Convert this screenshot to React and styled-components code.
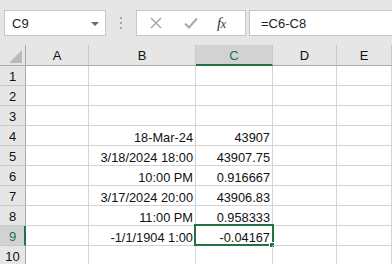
import React from "react";
import styled, { createGlobalStyle } from "styled-components";

const Global = createGlobalStyle`
  html, body { margin: 0; padding: 0; background: #ffffff; }
  body { font-family: "Liberation Sans", Arial, sans-serif; width: 392px; height: 264px; overflow: hidden; }
`;

const Page = styled.div`
  width: 392px;
  height: 264px;
  overflow: hidden;
  display: flex;
  flex-direction: column;
`;

const Toolbar = styled.div`
  height: 45px;
  flex: none;
  background: #e6e6e6;
  display: flex;
  align-items: flex-start;
  padding: 10px 0 0 4px;
  box-sizing: border-box;
`;

const NameBox = styled.div`
  width: 102px;
  height: 26px;
  box-sizing: border-box;
  background: #fff;
  border: 1px solid #c6c6c6;
  display: flex;
  align-items: center;
  padding: 0 0 0 7px;
  font-size: 13px;
  color: #222;
`;

const NameText = styled.span`
  flex: 1;
`;

const DropArrow = styled.span`
  width: 0;
  height: 0;
  border-left: 4px solid transparent;
  border-right: 4px solid transparent;
  border-top: 4px solid #6a6a6a;
  margin-right: 6px;
  margin-top: 1px;
`;

const Grip = styled.div`
  width: 30px;
  height: 26px;
  display: flex;
  flex-direction: column;
  align-items: center;
  justify-content: center;
  gap: 3px;
`;

const GripDot = styled.span`
  width: 2px;
  height: 2px;
  background: #a6a6a6;
`;

const FxBox = styled.div`
  width: 110px;
  height: 26px;
  box-sizing: border-box;
  background: #fff;
  border: 1px solid #c6c6c6;
  display: flex;
  align-items: center;
  padding-left: 13px;
  gap: 22px;
`;

const Fx = styled.span`
  font-family: "Liberation Serif", "Times New Roman", serif;
  font-style: italic;
  font-size: 15px;
  color: #333;
  margin-left: -3px;
  letter-spacing: -0.5px;
`;

const FxSub = styled.span`
  font-size: 12px;
`;

const FormulaInput = styled.div`
  flex: 1;
  margin-left: 3px;
  height: 26px;
  box-sizing: border-box;
  background: #fff;
  border: 1px solid #c6c6c6;
  border-right: none;
  display: flex;
  align-items: center;
  padding-left: 11px;
  font-size: 13px;
  color: #222;
`;

const Grid = styled.div`
  display: grid;
  grid-template-columns: 26px 63px 107px 77px 64px 1fr;
  grid-auto-rows: 20px;
  grid-template-rows: 21px;
  font-size: 12.8px;
`;

const ColHead = styled.div`
  box-sizing: border-box;
  font-size: 13px;
  background: ${(p) => (p.$sel ? "#d2d2d2" : "#e6e6e6")};
  border-right: 1px solid #c9c9c9;
  border-bottom: ${(p) => (p.$sel ? "2px solid #217346" : "1px solid #ababab")};
  color: ${(p) => (p.$sel ? "#217346" : "#111")};
  display: flex;
  align-items: center;
  justify-content: center;
  padding-top: ${(p) => (p.$sel ? "1px" : "0")};
`;

const Corner = styled.div`
  box-sizing: border-box;
  background: #e6e6e6;
  border-right: 1px solid #ababab;
  border-bottom: 1px solid #ababab;
  display: flex;
  align-items: flex-end;
  justify-content: flex-end;
  padding: 0 3px 2px 0;
`;

const Triangle = styled.span`
  width: 0;
  height: 0;
  border-left: 13px solid transparent;
  border-bottom: 13px solid #b9b9b9;
`;

const RowHead = styled.div`
  box-sizing: border-box;
  font-size: 13px;
  background: ${(p) => (p.$sel ? "#d2d2d2" : "#e6e6e6")};
  border-right: ${(p) => (p.$sel ? "2px solid #217346" : "1px solid #ababab")};
  border-bottom: 1px solid #c9c9c9;
  color: ${(p) => (p.$sel ? "#217346" : "#111")};
  display: flex;
  align-items: center;
  justify-content: center;
  padding: 1px 0 0 ${(p) => (p.$sel ? "1px" : "0")};
`;

const Cell = styled.div`
  box-sizing: border-box;
  border-right: 1px solid #d4d4d4;
  border-bottom: 1px solid #d4d4d4;
  display: flex;
  align-items: flex-end;
  justify-content: flex-end;
  padding: 0 2px 0 0;
  line-height: 15px;
  color: #111;
  white-space: nowrap;
  position: relative;
`;

const Selection = styled.span`
  position: absolute;
  left: -2px;
  top: -2px;
  width: 80px;
  height: 22px;
  box-sizing: border-box;
  border: 2px solid #217346;
  pointer-events: none;
`;

const Handle = styled.span`
  position: absolute;
  right: -3px;
  bottom: -4px;
  width: 6px;
  height: 6px;
  box-sizing: border-box;
  background: #217346;
  border: 1px solid #fff;
`;

const cols = ["A", "B", "C", "D", "E"];

const data = {
  4: { B: "18-Mar-24", C: "43907" },
  5: { B: "3/18/2024 18:00", C: "43907.75" },
  6: { B: "10:00 PM", C: "0.916667" },
  7: { B: "3/17/2024 20:00", C: "43906.83" },
  8: { B: "11:00 PM", C: "0.958333" },
  9: { B: "-1/1/1904 1:00", C: "-0.04167" },
};

const XIcon = () => (
  <svg width="12" height="12" viewBox="0 0 12 12">
    <path d="M1 1 L11 11 M11 1 L1 11" stroke="#a8a8a8" strokeWidth="1.5" fill="none" />
  </svg>
);

const CheckIcon = () => (
  <svg width="14" height="12" viewBox="0 0 14 12">
    <path d="M1 6.5 L5 10.5 L13 1.5" stroke="#a8a8a8" strokeWidth="2" fill="none" />
  </svg>
);

export default function App() {
  const rows = [1, 2, 3, 4, 5, 6, 7, 8, 9, 10];
  return (
    <Page>
      <Global />
      <Toolbar>
        <NameBox>
          <NameText>C9</NameText>
          <DropArrow />
        </NameBox>
        <Grip>
          <GripDot />
          <GripDot />
          <GripDot />
        </Grip>
        <FxBox>
          <XIcon />
          <CheckIcon />
          <Fx>
            f<FxSub>x</FxSub>
          </Fx>
        </FxBox>
        <FormulaInput>=C6-C8</FormulaInput>
      </Toolbar>
      <Grid>
        <Corner>
          <Triangle />
        </Corner>
        {cols.map((c) => (
          <ColHead key={c} $sel={c === "C"}>
            {c}
          </ColHead>
        ))}
        {rows.map((r) => (
          <React.Fragment key={r}>
            <RowHead $sel={r === 9}>{r}</RowHead>
            {cols.map((c) => (
              <Cell key={c}>
                {data[r] && data[r][c]}
                {r === 9 && c === "C" && (
                  <Selection>
                    <Handle />
                  </Selection>
                )}
              </Cell>
            ))}
          </React.Fragment>
        ))}
      </Grid>
    </Page>
  );
}
